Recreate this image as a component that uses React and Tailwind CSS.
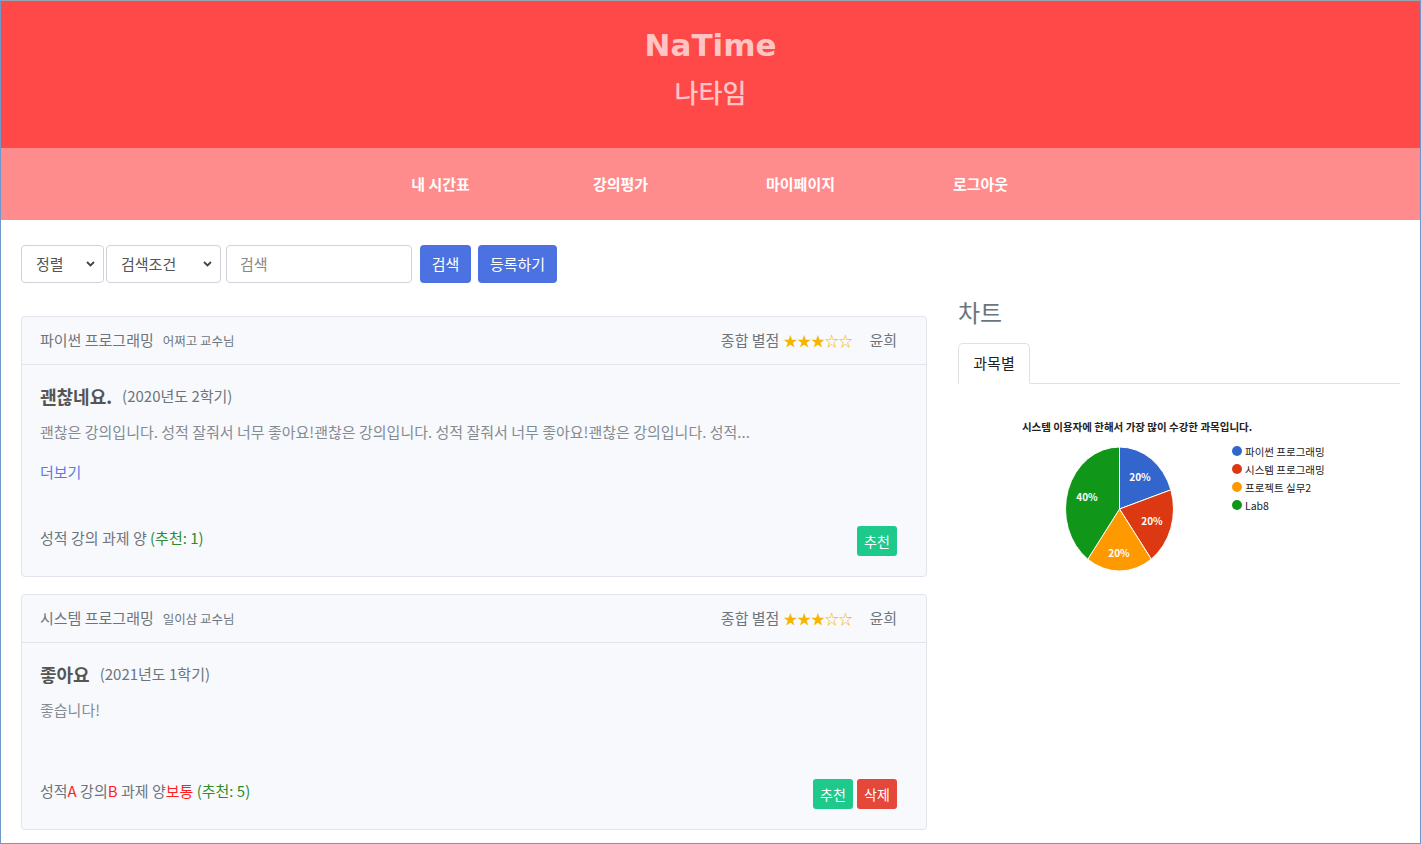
import { Fragment } from 'react'

const slices = [
  { from: 0, to: 72, color: '#3366cc', label: '20%', lx: 182, ly: 92 },
  { from: 72, to: 144, color: '#dc3912', label: '20%', lx: 194, ly: 136 },
  { from: 144, to: 216, color: '#ff9900', label: '20%', lx: 161, ly: 168 },
  { from: 216, to: 360, color: '#109618', label: '40%', lx: 129, ly: 112 },
]

const legend = [
  { color: '#3366cc', name: '파이썬 프로그래밍' },
  { color: '#dc3912', name: '시스템 프로그래밍' },
  { color: '#ff9900', name: '프로젝트 실무2' },
  { color: '#109618', name: 'Lab8' },
]

function point(cx, cy, rx, ry, deg) {
  const r = (deg * Math.PI) / 180
  return [cx + rx * Math.sin(r), cy - ry * Math.cos(r)]
}

function PieChart() {
  const cx = 161.5
  const cy = 125
  const rx = 54
  const ry = 62
  return (
    <svg width="442" height="220" viewBox="0 0 442 220">
      <text x="179" y="42" textAnchor="middle" dominantBaseline="central" fontSize="10.5" fontWeight="700" fill="#222">
        시스템 이용자에 한해서 가장 많이 수강한 과목입니다.
      </text>
      {slices.map((s) => {
        const [x1, y1] = point(cx, cy, rx, ry, s.from)
        const [x2, y2] = point(cx, cy, rx, ry, s.to)
        const large = s.to - s.from > 180 ? 1 : 0
        return (
          <path
            key={s.color}
            d={`M${cx},${cy} L${x1},${y1} A${rx},${ry} 0 ${large} 1 ${x2},${y2} Z`}
            fill={s.color}
            stroke="#fff"
            strokeWidth="1"
          />
        )
      })}
      {slices.map((s) => (
        <text key={'l' + s.color} x={s.lx} y={s.ly} textAnchor="middle" dominantBaseline="central" fontSize="10" fontWeight="700" fill="#fff">
          {s.label}
        </text>
      ))}
      {legend.map((l, i) => (
        <Fragment key={l.name}>
          <circle cx="279" cy={67 + i * 18} r="5" fill={l.color} />
          <text x="287" y={67 + i * 18} dominantBaseline="central" fontSize="10.5" fill="#222">
            {l.name}
          </text>
        </Fragment>
      ))}
    </svg>
  )
}

function Chevron() {
  return (
    <svg width="9" height="6" viewBox="0 0 9 6" className="shrink-0">
      <path d="M1 1l3.5 3.5L8 1" fill="none" stroke="#444" strokeWidth="1.8" />
    </svg>
  )
}

function Stars() {
  return (
    <span className="text-[#f5b400] text-[14px] tracking-[-0.2px]">★★★☆☆</span>
  )
}

function ReviewCard({ subject, prof, title, term, text, more, footer, showDelete, bodyGap }) {
  return (
    <div className="rounded-[4px] border border-[#e1e4ec] bg-[#f8f9fc]">
      <div className="flex h-[48px] items-center justify-between border-b border-[#e2e5ee] pl-[18px] pr-[29px]">
        <div className="flex items-baseline gap-[9px]">
          <span className="text-[15px] text-[#6c757d]">{subject}</span>
          <span className="text-[12.5px] text-[#6c757d]">{prof}</span>
        </div>
        <div className="flex items-center">
          <span className="mr-[4px] text-[15px] text-[#6c757d]">종합 별점</span>
          <Stars />
          <span className="ml-[17px] text-[15px] text-[#6c757d]">윤희</span>
        </div>
      </div>
      <div className="pl-[18px] pr-[29px] pt-[19px] pb-[20px]">
        <div className="flex h-[24px] items-center gap-[10px]">
          <span className="text-[18px] font-bold text-[#555]">{title}</span>
          <span className="text-[15px] text-[#6c757d]">{term}</span>
        </div>
        <p className="mt-[12px] h-[24px] text-[15px] leading-[24px] text-[#858b92]">{text}</p>
        {more && <p className="mt-[16px] h-[24px] text-[15px] leading-[24px] text-[#5b7be6]">더보기</p>}
        <div className={`flex items-start justify-between ${bodyGap}`}>
          <span className="text-[15px] leading-[24px] text-[#6c757d]">{footer}</span>
          <div className="flex gap-[4px]">
            <button className="h-[30px] w-[40px] rounded-[3px] bg-[#1dc98b] text-[14px] text-white">추천</button>
            {showDelete && (
              <button className="h-[30px] w-[40px] rounded-[3px] bg-[#e5473b] text-[14px] text-white">삭제</button>
            )}
          </div>
        </div>
      </div>
    </div>
  )
}

export default function App() {
  return (
    <div className="h-[844px] w-[1421px] overflow-hidden border border-[#6f97c9] border-t-[#9aa4b0] bg-white font-['Noto_Sans_CJK_KR',sans-serif]">
      <header className="flex h-[147px] flex-col items-center bg-[#ff4848] pt-[26px]">
        <h1 className="font-['DejaVu_Sans',sans-serif] text-[31px] font-bold leading-[36px] text-[#ffc4c4]">NaTime</h1>
        <p className="mt-[13px] text-[26px] font-medium leading-[32px] text-[#ffc4c4]">나타임</p>
      </header>
      <nav className="flex h-[72px] items-center justify-center bg-[#ff8c8c]">
        {['내 시간표', '강의평가', '마이페이지', '로그아웃'].map((item) => (
          <a key={item} className="w-[180px] text-center text-[15px] font-bold text-white">
            {item}
          </a>
        ))}
      </nav>

      <main className="flex gap-[31px] px-[20px] pt-[25px]">
        <section className="w-[907px]">
          <div className="flex h-[38px] items-stretch text-[15px] text-[#555]">
            <div className="flex w-[83px] items-center justify-between rounded-[4px] border border-[#ced4da] bg-white pl-[14px] pr-[8px]">
              정렬 <Chevron />
            </div>
            <div className="ml-[2px] flex w-[115px] items-center justify-between rounded-[4px] border border-[#ced4da] bg-white pl-[14px] pr-[8px]">
              검색조건 <Chevron />
            </div>
            <div className="ml-[5px] flex w-[186px] items-center rounded-[4px] border border-[#ced4da] bg-white pl-[13px] text-[#888]">
              검색
            </div>
            <button className="ml-[8px] w-[51px] rounded-[4px] bg-[#4c71e0] text-white">검색</button>
            <button className="ml-[7px] w-[79px] rounded-[4px] bg-[#4c71e0] text-white">등록하기</button>
          </div>

          <div className="mt-[33px] flex flex-col gap-[17px]">
            <ReviewCard
              subject="파이썬 프로그래밍"
              prof="어쩌고 교수님"
              title="괜찮네요."
              term="(2020년도 2학기)"
              text="괜찮은 강의입니다. 성적 잘줘서 너무 좋아요!괜찮은 강의입니다. 성적 잘줘서 너무 좋아요!괜찮은 강의입니다. 성적..."
              more
              bodyGap="mt-[42px]"
              footer={
                <>
                  성적 강의 과제 양 <span className="text-[#2e8b2e]">(추천: 1)</span>
                </>
              }
            />
            <ReviewCard
              subject="시스템 프로그래밍"
              prof="일이삼 교수님"
              title="좋아요"
              term="(2021년도 1학기)"
              text="좋습니다!"
              showDelete
              bodyGap="mt-[57px]"
              footer={
                <>
                  성적<span className="text-[#ff1f1f]">A</span> 강의<span className="text-[#ff1f1f]">B</span> 과제 양
                  <span className="text-[#ff1f1f]">보통</span> <span className="text-[#2e8b2e]">(추천: 5)</span>
                </>
              }
            />
          </div>
        </section>

        <aside className="w-[442px] pt-[52px]">
          <h4 className="text-[24px] leading-[29px] text-[#6c757d]">차트</h4>
          <div className="mt-[17px] flex border-b border-[#dee2e6]">
            <div className="-mb-px flex h-[41px] w-[72px] items-center justify-center rounded-t-[5px] border border-[#dee2e6] border-b-white bg-white text-[15px] text-[#222]">
              과목별
            </div>
          </div>
          <PieChart />
        </aside>
      </main>
    </div>
  )
}
